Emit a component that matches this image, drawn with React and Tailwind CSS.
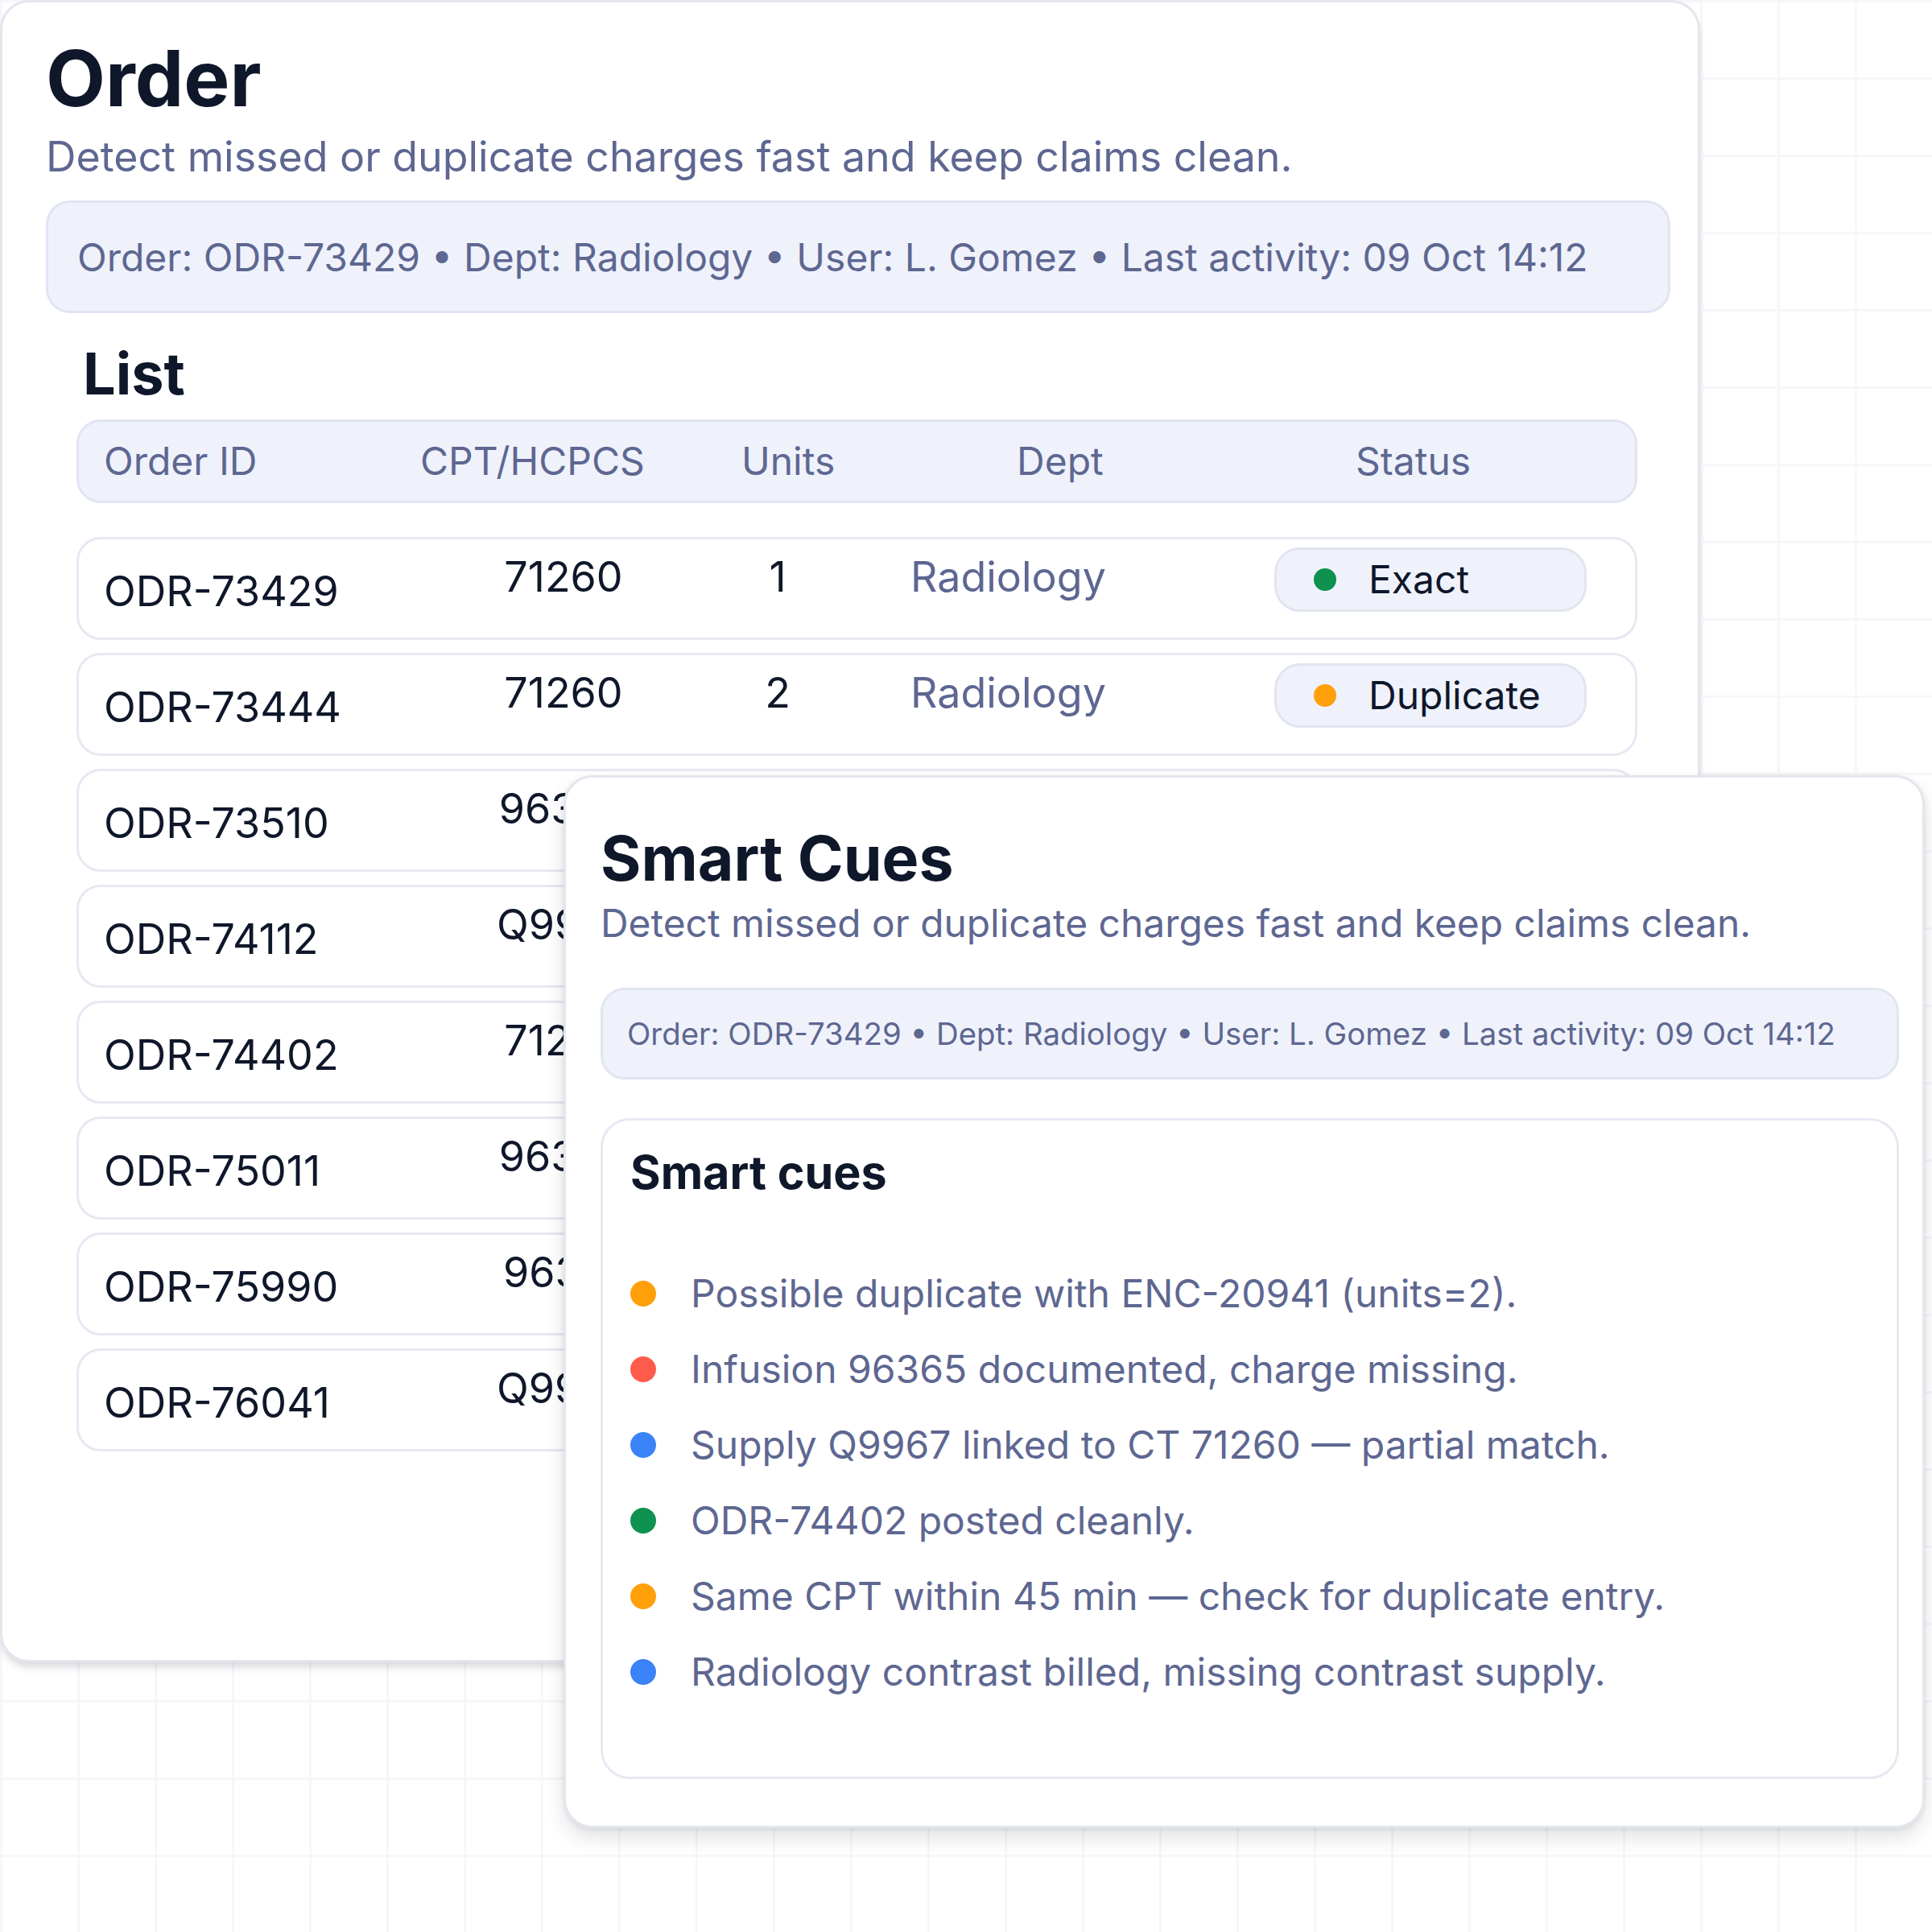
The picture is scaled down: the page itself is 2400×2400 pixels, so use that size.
const rows = [
  { id: 'ODR-73429', cpt: '71260', units: '1', dept: 'Radiology', status: 'Exact', dot: 'bg-[#0f914f]' },
  { id: 'ODR-73444', cpt: '71260', units: '2', dept: 'Radiology', status: 'Duplicate', dot: 'bg-[#ff9f0a]' },
  { id: 'ODR-73510', cpt: '96365', units: '1', dept: 'Infusion', status: 'Missing', dot: 'bg-[#ff5b4d]' },
  { id: 'ODR-74112', cpt: 'Q9967', units: '1', dept: 'Radiology', status: 'Partial', dot: 'bg-[#3a82f7]' },
  { id: 'ODR-74402', cpt: '71260', units: '1', dept: 'Radiology', status: 'Exact', dot: 'bg-[#0f914f]' },
  { id: 'ODR-75011', cpt: '96365', units: '1', dept: 'Infusion', status: 'Missing', dot: 'bg-[#ff5b4d]' },
  { id: 'ODR-75990', cpt: '96361', units: '1', dept: 'Infusion', status: 'Exact', dot: 'bg-[#0f914f]' },
  { id: 'ODR-76041', cpt: 'Q9967', units: '2', dept: 'Radiology', status: 'Partial', dot: 'bg-[#3a82f7]' },
];

const cues = [
  { text: 'Possible duplicate with ENC-20941 (units=2).', dot: 'bg-[#ff9f0a]' },
  { text: 'Infusion 96365 documented, charge missing.', dot: 'bg-[#ff5b4d]' },
  { text: 'Supply Q9967 linked to CT 71260 \u2014 partial match.', dot: 'bg-[#3a82f7]' },
  { text: 'ODR-74402 posted cleanly.', dot: 'bg-[#0f914f]' },
  { text: 'Same CPT within 45 min \u2014 check for duplicate entry.', dot: 'bg-[#ff9f0a]' },
  { text: 'Radiology contrast billed, missing contrast supply.', dot: 'bg-[#3a82f7]' },
];

const meta = 'Order: ODR-73429 \u2022 Dept: Radiology \u2022 User: L. Gomez \u2022 Last activity: 09 Oct 14:12';

export default function App() {
  return (
    <div className="relative w-[2400px] h-[2400px] overflow-hidden bg-white bg-[linear-gradient(to_right,#f6f7f9_3px,transparent_3px),linear-gradient(to_bottom,#f6f7f9_3px,transparent_3px)] bg-[size:96px_96px] font-['Inter',sans-serif]">
      <section className="w-[2112px] h-[2065px] rounded-[36px] border-[3px] border-[#e4e6ee] bg-white pt-[46px] pl-[54px] pr-[34px] shadow-[0_8px_10px_-2px_rgba(15,23,42,0.16)]">
        <h1 className="text-[96px] leading-[96px] font-bold text-[#0f172a]">Order</h1>
        <p className="mt-[14px] text-[51.9px] leading-[72px] text-[#5e6791] whitespace-nowrap">
          Detect missed or duplicate charges fast and keep claims clean.
        </p>
        <div className="mt-[18px] h-[140px] rounded-[30px] border-[3px] border-[#e1e5f2] bg-[#eff2fb] px-[36px] pt-[2px] flex items-center text-[48px] leading-[72px] text-[#5e6791] whitespace-nowrap">
          {meta}
        </div>
        <div className="pl-[38px] pr-[41px] pt-[39px]">
          <h2 className="pl-[8px] text-[72px] leading-[72px] font-bold text-[#0f172a]">List</h2>
          <div className="mt-[21px] h-[104px] rounded-[30px] border-[3px] border-[#e1e5f2] bg-[#eff2fb] pl-[31px] grid grid-cols-[393px_399px_342px_421px_1fr] items-center text-[48px] leading-[60px] text-[#5e6791]">
            <span>Order ID</span>
            <span>CPT/HCPCS</span>
            <span>Units</span>
            <span>Dept</span>
            <span>Status</span>
          </div>
          <div className="mt-[42px] flex flex-col gap-[16px]">
            {rows.map((r) => (
              <div
                key={r.id}
                className="h-[128px] rounded-[30px] border-[3px] border-[#e6e9f2] bg-white pl-[31px] grid grid-cols-[443px_256px_276px_479px_388px] items-start text-[52px] leading-[64px]"
              >
                <span className="mt-[33px] text-[#0f172a]">{r.id}</span>
                <span className="mt-[15px] text-center text-[#0f172a]">{r.cpt}</span>
                <span className="mt-[15px] text-center text-[#0f172a]">{r.units}</span>
                <span className="mt-[15px] pl-[27px] text-[#5e6791]">{r.dept}</span>
                <span className="mt-[10px] h-[80px] w-[388px] rounded-[32px] border-[3px] border-[#e2e5f0] bg-[#eff2fb] pl-[46px] flex items-center gap-[40px] text-[48px] leading-[60px] text-[#0f172a]">
                  <span className={`block w-[28px] h-[28px] rounded-full shrink-0 ${r.dot}`}></span>
                  <span>{r.status}</span>
                </span>
              </div>
            ))}
          </div>
        </div>
      </section>

      <section className="absolute left-[700px] top-[963px] w-[1691px] h-[1308px] rounded-[36px] border-[3px] border-[#e4e6ee] bg-white pt-[62px] pl-[43px] pr-[29px] shadow-[0_12px_24px_rgba(15,23,42,0.12),0_2px_6px_rgba(15,23,42,0.08)]">
        <h2 className="text-[77px] leading-[76px] font-bold text-[#0f172a]">Smart Cues</h2>
        <p className="mt-[10px] text-[47.9px] leading-[66px] text-[#5e6791] whitespace-nowrap">
          Detect missed or duplicate charges fast and keep claims clean.
        </p>
        <div className="mt-[47px] h-[114px] rounded-[30px] border-[3px] border-[#e1e5f2] bg-[#eff2fb] px-[30px] flex items-center text-[38.4px] leading-[57px] text-[#5e6791] whitespace-nowrap">
          {meta}
        </div>
        <div className="mt-[48px] h-[821px] rounded-[36px] border-[3px] border-[#e6e9f2] bg-white pt-[36px] px-[34px]">
          <h3 className="text-[57.5px] leading-[56px] font-bold text-[#0f172a]">Smart cues</h3>
          <ul className="mt-[87px] flex flex-col gap-[22px]">
            {cues.map((c) => (
              <li key={c.text} className="h-[72px] flex items-center gap-[43px] text-[48px] leading-[72px] text-[#5e6791]">
                <span className={`w-[32px] h-[32px] rounded-full shrink-0 ${c.dot}`}></span>
                <span>{c.text}</span>
              </li>
            ))}
          </ul>
        </div>
      </section>
    </div>
  );
}
